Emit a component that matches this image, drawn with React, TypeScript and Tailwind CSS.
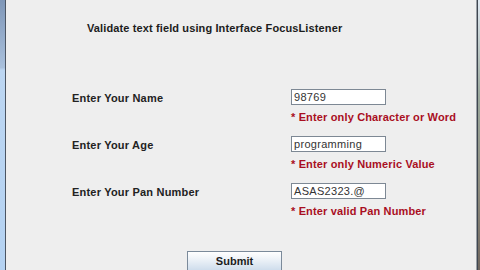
const FONT = "font-['Liberation_Sans',Arial,sans-serif]";

const rows = [
  { label: "Enter Your Name", value: "98769", error: "* Enter only Character or Word" },
  { label: "Enter Your Age", value: "programming", error: "* Enter only Numeric Value" },
  { label: "Enter Your Pan Number", value: "ASAS2323.@", error: "* Enter valid Pan Number" },
];

export default function App() {
  return (
    <div className={`flex h-[270px] w-[480px] overflow-hidden bg-[#eeeeee] ${FONT}`}>
      {/* left window frame */}
      <div className="w-[5px] bg-[linear-gradient(180deg,#7f97b8_0%,#a9c0dc_25%,#bcd6f2_26%,#b4d2f2_100%)]" />
      <div className="w-px bg-[#4b5563]" />

      <div className="flex-1 flex flex-col">
        <div className="mt-[21px] pl-[81px] text-[11px] leading-[14px] font-bold text-[#1c1c1c] tracking-[0.12px]">
          Validate text field using Interface FocusListener
        </div>

        <div className="mt-[54px] flex flex-col gap-[12px]">
          {rows.map((r) => (
            <div key={r.label} className="flex">
              <div className="w-[285px] shrink-0 pl-[66px] pt-[2px] h-[16px] flex items-center text-[11px] font-bold text-[#222] tracking-[0.2px]">
                {r.label}
              </div>
              <div className="flex flex-col">
                <div className="w-[95px] h-[16px] bg-white border border-[#7d8894] flex items-center px-[2px] text-[11px] text-[#333] tracking-[0.3px]">
                  {r.value}
                </div>
                <div className="mt-[5px] h-[14px] leading-[14px] text-[11px] font-bold text-[#a90f1f] tracking-[0.15px] whitespace-nowrap">
                  {r.error}
                </div>
              </div>
            </div>
          ))}
        </div>

        <div className="mt-[30px] pl-[181px]">
          <button className="w-[95px] h-[22px] border border-[#7b8a9a] bg-[linear-gradient(180deg,#ffffff_0%,#eef3f8_35%,#c9d9ea_100%)] text-[11px] font-bold text-[#1c1c1c] pb-[2px]">
            Submit
          </button>
        </div>
      </div>

      {/* right window frame */}
      <div className="w-px bg-[#9aa0a6]" />
      <div className="w-px bg-[#3f4650]" />
      <div className="w-[2px] bg-[linear-gradient(180deg,#dfe9f2_0%,#9aa89c_35%,#8c8a7c_70%,#6f665e_100%)]" />
    </div>
  );
}
